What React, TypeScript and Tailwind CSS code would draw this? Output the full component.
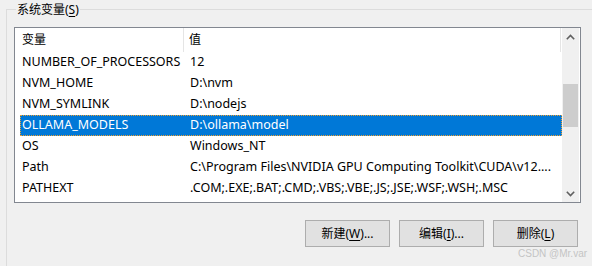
import React from "react";

const ui = { fontFamily: '"Noto Sans", "Noto Sans CJK SC", sans-serif' };

const rows: [string, string][] = [
  ["NUMBER_OF_PROCESSORS", "12"],
  ["NVM_HOME", "D:\\nvm"],
  ["NVM_SYMLINK", "D:\\nodejs"],
  ["OLLAMA_MODELS", "D:\\ollama\\model"],
  ["OS", "Windows_NT"],
  ["Path", "C:\\Program Files\\NVIDIA GPU Computing Toolkit\\CUDA\\v12...."],
  ["PATHEXT", ".COM;.EXE;.BAT;.CMD;.VBS;.VBE;.JS;.JSE;.WSF;.WSH;.MSC"],
];

const SELECTED = 3;

function Chevron({ down }: { down?: boolean }) {
  return (
    <svg width="9" height="6" viewBox="0 0 9 6" className={down ? "rotate-180" : ""}>
      <path d="M0.8 5.2 L4.5 1.5 L8.2 5.2" fill="none" stroke="#606060" strokeWidth="1.6" />
    </svg>
  );
}

function Button({ label, hotkey, suffix }: { label: string; hotkey: string; suffix: string }) {
  return (
    <button
      type="button"
      className="flex h-[27px] w-[85px] items-center justify-center border border-[#adadad] bg-[#e1e1e1] text-[12px] text-black"
    >
      {label}(<span className="underline underline-offset-2">{hotkey}</span>){suffix}
    </button>
  );
}

export default function App() {
  return (
    <div className="h-[266px] w-[592px] overflow-hidden bg-[#f0f0f0] text-[12px] leading-none text-black" style={ui}>
      <fieldset className="ml-[6px] mt-[2px] h-[300px] w-[600px] border-l border-t border-[#dcdcdc] pl-[7px]">
        <legend className="ml-[2px] px-[1px] text-[12px] leading-[15px]">
          系统变量(<span className="underline underline-offset-2">S</span>)
        </legend>

        {/* list view */}
        <div className="mt-[10px] flex h-[176px] w-[567px] border border-[#828790] bg-white">
          <div className="flex w-[547px] flex-col">
            <div className="flex h-[24px] items-center">
              <div className="flex h-full w-[169px] items-center border-r border-[#e5e5e5] pl-[7px]">变量</div>
              <div className="flex h-full w-[377px] items-center border-r border-[#e5e5e5] pl-[5px]">值</div>
            </div>
            {rows.map(([name, value], i) => (
              <div
                key={name}
                className={
                  "ml-[5px] flex h-[21px] w-[542px] items-center whitespace-nowrap text-[12.5px] " +
                  (i === SELECTED ? "bg-[#0078d7] text-white outline-1 -outline-offset-1 outline-dotted outline-[#f0a030]" : "")
                }
              >
                <div className="w-[164px] pl-[2px]">{name}</div>
                <div className="pl-[6px]">{value}</div>
              </div>
            ))}
          </div>

          {/* scrollbar */}
          <div className="flex w-[17px] flex-col items-center bg-[#f0f0f0]">
            <div className="flex h-[17px] w-full items-center justify-center">
              <Chevron />
            </div>
            <div className="mt-[39px] h-[43px] w-[15px] bg-[#cdcdcd]" />
            <div className="flex-1" />
            <div className="flex h-[17px] w-full items-center justify-center">
              <Chevron down />
            </div>
          </div>
        </div>

        <div className="ml-[291px] mt-[17px] flex w-[274px] gap-[9px]">
          <Button label="新建" hotkey="W" suffix="..." />
          <Button label="编辑" hotkey="I" suffix="..." />
          <Button label="删除" hotkey="L" suffix="" />
        </div>
        <div
          className="ml-[504px] mt-[1px] whitespace-nowrap text-[10px] leading-[12px] text-[#c4c4c4]"
          style={{ fontFamily: '"Liberation Sans", sans-serif' }}
        >
          CSDN @Mr.var
        </div>
      </fieldset>
    </div>
  );
}
